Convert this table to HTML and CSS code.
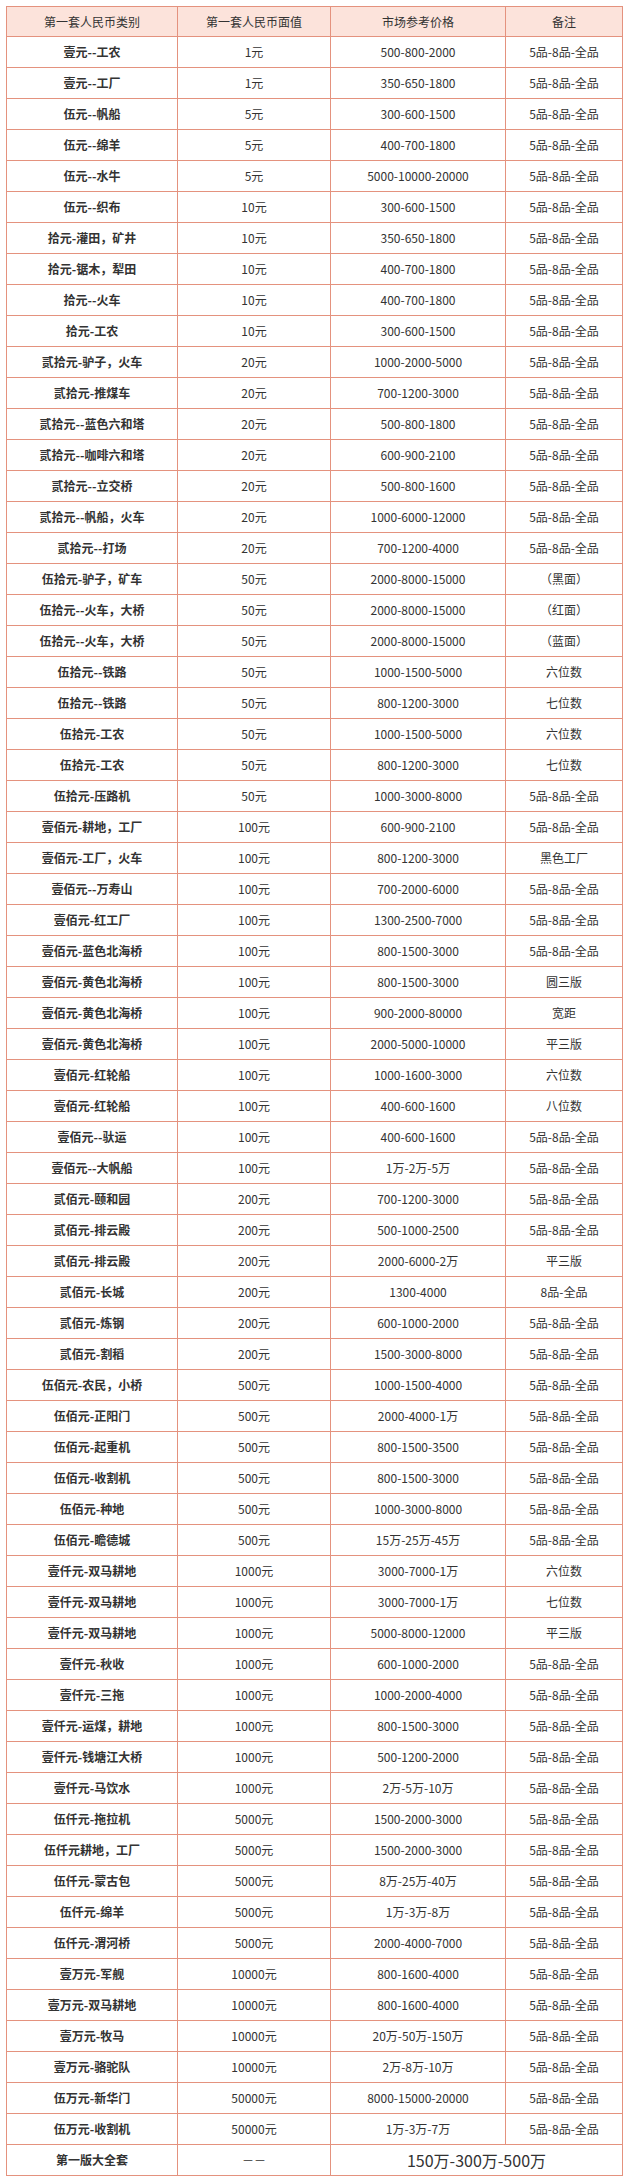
FILE: index.html
```html
<!DOCTYPE html>
<html lang="zh-CN">
<head>
<meta charset="utf-8">
<title>第一套人民币价格表</title>
<link rel="stylesheet" href="styles.css">
</head>
<body>
<table class="price-table">
<colgroup>
<col class="c1"><col class="c2"><col class="c3"><col class="c4">
</colgroup>
<thead>
<tr><th>第一套人民币类别</th><th>第一套人民币面值</th><th>市场参考价格</th><th>备注</th></tr>
</thead>
<tbody>
<tr><td class="name">壹元--工农</td><td>1元</td><td>500-800-2000</td><td>5品-8品-全品</td></tr>
<tr><td class="name">壹元--工厂</td><td>1元</td><td>350-650-1800</td><td>5品-8品-全品</td></tr>
<tr><td class="name">伍元--帆船</td><td>5元</td><td>300-600-1500</td><td>5品-8品-全品</td></tr>
<tr><td class="name">伍元--绵羊</td><td>5元</td><td>400-700-1800</td><td>5品-8品-全品</td></tr>
<tr><td class="name">伍元--水牛</td><td>5元</td><td>5000-10000-20000</td><td>5品-8品-全品</td></tr>
<tr><td class="name">伍元--织布</td><td>10元</td><td>300-600-1500</td><td>5品-8品-全品</td></tr>
<tr><td class="name">拾元-灌田，矿井</td><td>10元</td><td>350-650-1800</td><td>5品-8品-全品</td></tr>
<tr><td class="name">拾元-锯木，犁田</td><td>10元</td><td>400-700-1800</td><td>5品-8品-全品</td></tr>
<tr><td class="name">拾元--火车</td><td>10元</td><td>400-700-1800</td><td>5品-8品-全品</td></tr>
<tr><td class="name">拾元-工农</td><td>10元</td><td>300-600-1500</td><td>5品-8品-全品</td></tr>
<tr><td class="name">贰拾元-驴子，火车</td><td>20元</td><td>1000-2000-5000</td><td>5品-8品-全品</td></tr>
<tr><td class="name">贰拾元-推煤车</td><td>20元</td><td>700-1200-3000</td><td>5品-8品-全品</td></tr>
<tr><td class="name">贰拾元--蓝色六和塔</td><td>20元</td><td>500-800-1800</td><td>5品-8品-全品</td></tr>
<tr><td class="name">贰拾元--咖啡六和塔</td><td>20元</td><td>600-900-2100</td><td>5品-8品-全品</td></tr>
<tr><td class="name">贰拾元--立交桥</td><td>20元</td><td>500-800-1600</td><td>5品-8品-全品</td></tr>
<tr><td class="name">贰拾元--帆船，火车</td><td>20元</td><td>1000-6000-12000</td><td>5品-8品-全品</td></tr>
<tr><td class="name">贰拾元--打场</td><td>20元</td><td>700-1200-4000</td><td>5品-8品-全品</td></tr>
<tr><td class="name">伍拾元-驴子，矿车</td><td>50元</td><td>2000-8000-15000</td><td>（黑面）</td></tr>
<tr><td class="name">伍拾元--火车，大桥</td><td>50元</td><td>2000-8000-15000</td><td>（红面）</td></tr>
<tr><td class="name">伍拾元--火车，大桥</td><td>50元</td><td>2000-8000-15000</td><td>（蓝面）</td></tr>
<tr><td class="name">伍拾元--铁路</td><td>50元</td><td>1000-1500-5000</td><td>六位数</td></tr>
<tr><td class="name">伍拾元--铁路</td><td>50元</td><td>800-1200-3000</td><td>七位数</td></tr>
<tr><td class="name">伍拾元-工农</td><td>50元</td><td>1000-1500-5000</td><td>六位数</td></tr>
<tr><td class="name">伍拾元-工农</td><td>50元</td><td>800-1200-3000</td><td>七位数</td></tr>
<tr><td class="name">伍拾元-压路机</td><td>50元</td><td>1000-3000-8000</td><td>5品-8品-全品</td></tr>
<tr><td class="name">壹佰元-耕地，工厂</td><td>100元</td><td>600-900-2100</td><td>5品-8品-全品</td></tr>
<tr><td class="name">壹佰元-工厂，火车</td><td>100元</td><td>800-1200-3000</td><td>黑色工厂</td></tr>
<tr><td class="name">壹佰元--万寿山</td><td>100元</td><td>700-2000-6000</td><td>5品-8品-全品</td></tr>
<tr><td class="name">壹佰元-红工厂</td><td>100元</td><td>1300-2500-7000</td><td>5品-8品-全品</td></tr>
<tr><td class="name">壹佰元-蓝色北海桥</td><td>100元</td><td>800-1500-3000</td><td>5品-8品-全品</td></tr>
<tr><td class="name">壹佰元-黄色北海桥</td><td>100元</td><td>800-1500-3000</td><td>圆三版</td></tr>
<tr><td class="name">壹佰元-黄色北海桥</td><td>100元</td><td>900-2000-80000</td><td>宽距</td></tr>
<tr><td class="name">壹佰元-黄色北海桥</td><td>100元</td><td>2000-5000-10000</td><td>平三版</td></tr>
<tr><td class="name">壹佰元-红轮船</td><td>100元</td><td>1000-1600-3000</td><td>六位数</td></tr>
<tr><td class="name">壹佰元-红轮船</td><td>100元</td><td>400-600-1600</td><td>八位数</td></tr>
<tr><td class="name">壹佰元--驮运</td><td>100元</td><td>400-600-1600</td><td>5品-8品-全品</td></tr>
<tr><td class="name">壹佰元--大帆船</td><td>100元</td><td>1万-2万-5万</td><td>5品-8品-全品</td></tr>
<tr><td class="name">贰佰元-颐和园</td><td>200元</td><td>700-1200-3000</td><td>5品-8品-全品</td></tr>
<tr><td class="name">贰佰元-排云殿</td><td>200元</td><td>500-1000-2500</td><td>5品-8品-全品</td></tr>
<tr><td class="name">贰佰元-排云殿</td><td>200元</td><td>2000-6000-2万</td><td>平三版</td></tr>
<tr><td class="name">贰佰元-长城</td><td>200元</td><td>1300-4000</td><td>8品-全品</td></tr>
<tr><td class="name">贰佰元-炼钢</td><td>200元</td><td>600-1000-2000</td><td>5品-8品-全品</td></tr>
<tr><td class="name">贰佰元-割稻</td><td>200元</td><td>1500-3000-8000</td><td>5品-8品-全品</td></tr>
<tr><td class="name">伍佰元-农民，小桥</td><td>500元</td><td>1000-1500-4000</td><td>5品-8品-全品</td></tr>
<tr><td class="name">伍佰元-正阳门</td><td>500元</td><td>2000-4000-1万</td><td>5品-8品-全品</td></tr>
<tr><td class="name">伍佰元-起重机</td><td>500元</td><td>800-1500-3500</td><td>5品-8品-全品</td></tr>
<tr><td class="name">伍佰元-收割机</td><td>500元</td><td>800-1500-3000</td><td>5品-8品-全品</td></tr>
<tr><td class="name">伍佰元-种地</td><td>500元</td><td>1000-3000-8000</td><td>5品-8品-全品</td></tr>
<tr><td class="name">伍佰元-瞻德城</td><td>500元</td><td>15万-25万-45万</td><td>5品-8品-全品</td></tr>
<tr><td class="name">壹仟元-双马耕地</td><td>1000元</td><td>3000-7000-1万</td><td>六位数</td></tr>
<tr><td class="name">壹仟元-双马耕地</td><td>1000元</td><td>3000-7000-1万</td><td>七位数</td></tr>
<tr><td class="name">壹仟元-双马耕地</td><td>1000元</td><td>5000-8000-12000</td><td>平三版</td></tr>
<tr><td class="name">壹仟元-秋收</td><td>1000元</td><td>600-1000-2000</td><td>5品-8品-全品</td></tr>
<tr><td class="name">壹仟元-三拖</td><td>1000元</td><td>1000-2000-4000</td><td>5品-8品-全品</td></tr>
<tr><td class="name">壹仟元-运煤，耕地</td><td>1000元</td><td>800-1500-3000</td><td>5品-8品-全品</td></tr>
<tr><td class="name">壹仟元-钱塘江大桥</td><td>1000元</td><td>500-1200-2000</td><td>5品-8品-全品</td></tr>
<tr><td class="name">壹仟元-马饮水</td><td>1000元</td><td>2万-5万-10万</td><td>5品-8品-全品</td></tr>
<tr><td class="name">伍仟元-拖拉机</td><td>5000元</td><td>1500-2000-3000</td><td>5品-8品-全品</td></tr>
<tr><td class="name">伍仟元耕地，工厂</td><td>5000元</td><td>1500-2000-3000</td><td>5品-8品-全品</td></tr>
<tr><td class="name">伍仟元-蒙古包</td><td>5000元</td><td>8万-25万-40万</td><td>5品-8品-全品</td></tr>
<tr><td class="name">伍仟元-绵羊</td><td>5000元</td><td>1万-3万-8万</td><td>5品-8品-全品</td></tr>
<tr><td class="name">伍仟元-渭河桥</td><td>5000元</td><td>2000-4000-7000</td><td>5品-8品-全品</td></tr>
<tr><td class="name">壹万元-军舰</td><td>10000元</td><td>800-1600-4000</td><td>5品-8品-全品</td></tr>
<tr><td class="name">壹万元-双马耕地</td><td>10000元</td><td>800-1600-4000</td><td>5品-8品-全品</td></tr>
<tr><td class="name">壹万元-牧马</td><td>10000元</td><td>20万-50万-150万</td><td>5品-8品-全品</td></tr>
<tr><td class="name">壹万元-骆驼队</td><td>10000元</td><td>2万-8万-10万</td><td>5品-8品-全品</td></tr>
<tr><td class="name">伍万元-新华门</td><td>50000元</td><td>8000-15000-20000</td><td>5品-8品-全品</td></tr>
<tr><td class="name">伍万元-收割机</td><td>50000元</td><td>1万-3万-7万</td><td>5品-8品-全品</td></tr>
<tr><td class="name">第一版大全套</td><td>－－</td><td class="total" colspan="2">150万-300万-500万</td></tr>
</tbody>
</table>
</body>
</html>
```
FILE: styles.css
```css
html, body {
  margin: 0;
  padding: 0;
  background: #ffffff;
}

body {
  padding: 6px 5px 0 6px;
  font-family: "Noto Sans CJK SC", "Noto Sans", "Liberation Sans", sans-serif;
  font-size: 12px;
  color: #333333;
}

.price-table {
  width: 616px;
  border-collapse: collapse;
  table-layout: fixed;
}

.c1 { width: 171px; }
.c2 { width: 153px; }
.c3 { width: 175px; }
.c4 { width: 117px; }

.price-table th,
.price-table td {
  border: 1px solid #e4927e;
  padding: 0;
  text-align: center;
  vertical-align: middle;
  white-space: nowrap;
  overflow: hidden;
}

.price-table th {
  background: #fce3db;
  font-weight: normal;
  height: 29px;
  line-height: 29px;
  color: #333333;
}

.price-table td {
  height: 30px;
  line-height: 30px;
}

.price-table td.name {
  font-weight: bold;
  color: #333333;
}

.price-table td.total {
  font-size: 16px;
}
```
